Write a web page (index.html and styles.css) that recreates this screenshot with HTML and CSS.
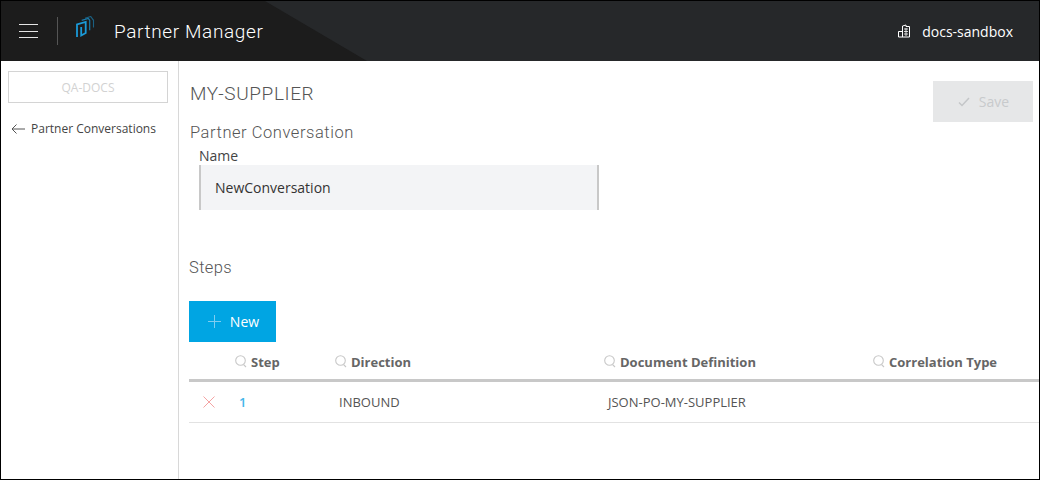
FILE: index.html
```html
<!DOCTYPE html>
<html lang="en">
<head>
<meta charset="utf-8">
<title>Partner Manager</title>
<link rel="stylesheet" href="styles.css">
</head>
<body>
<div class="frame">
  <header class="topbar">
    <button class="burger" aria-label="Menu"><span></span><span></span><span></span></button>
    <div class="divider"></div>
    <svg class="logo" width="20" height="24" viewBox="0 0 20 24" fill="none" stroke="#1a9ad8">
      <path d="M2 21V8.500L10.700 6V17L6.200 19.500V11" stroke-width="1.800"/>
      <path d="M6.700 4.300L13.300 2.400L14.700 4.300V14.300" stroke-width="1.200" opacity=".75"/>
      <path d="M10 2.200L15.700 .5L18.500 4.300V11.500" stroke-width="1.100" opacity=".55"/>
    </svg>
    <h1 class="app-title">Partner Manager</h1>
    <div class="tenant">
      <svg class="tenant-icon" width="13" height="14" viewBox="0 0 13 14" fill="none" stroke="#fff" stroke-width="1">
        <path d="M4.500 13V2L8 1V2.500H11.500V13H.5V7.500H4.500"/>
        <path d="M6 5h4M6 7.500h4M6 10h4M8 4v8" stroke-width=".8"/>
      </svg>
      <span>docs-sandbox</span>
    </div>
  </header>
  <div class="body">
    <aside class="sidebar">
      <div class="org">QA-DOCS</div>
      <a class="back">
        <svg width="14" height="10" viewBox="0 0 14 10" fill="none" stroke="#555" stroke-width="1"><path d="M14 5H1M5.500 .5L1 5l4.500 4.500"/></svg>
        <span>Partner Conversations</span>
      </a>
    </aside>
    <main class="content">
      <div class="title-row">
        <div>
          <h2 class="supplier">MY-SUPPLIER</h2>
          <h3 class="section">Partner Conversation</h3>
        </div>
        <button class="save">
          <svg width="12" height="10" viewBox="0 0 12 10" fill="none" stroke="#c4c6c8" stroke-width="1.500"><path d="M1 5.500L4 8.500 11 1"/></svg>
          <span>Save</span>
        </button>
      </div>
      <div class="field">
        <label class="field-label">Name</label>
        <div class="field-input">NewConversation</div>
      </div>
      <h3 class="steps">Steps</h3>
      <button class="new">
        <svg width="13" height="13" viewBox="0 0 13 13" fill="none" stroke="#7fcdf0" stroke-width="1"><path d="M6.500 0v13M0 6.500h13"/></svg>
        <span>New</span>
      </button>
      <div class="table">
        <div class="row head">
          <div></div>
          <div class="th"><svg class="lens" width="12" height="13" viewBox="0 0 12 13" fill="none" stroke="#c8c8c8" stroke-width="1.100"><circle cx="5.500" cy="5.500" r="4.800"/><path d="M8.500 9.500l2.500 2.500"/></svg>Step</div>
          <div class="th"><svg class="lens" width="12" height="13" viewBox="0 0 12 13" fill="none" stroke="#c8c8c8" stroke-width="1.100"><circle cx="5.500" cy="5.500" r="4.800"/><path d="M8.500 9.500l2.500 2.500"/></svg>Direction</div>
          <div class="th"><svg class="lens" width="12" height="13" viewBox="0 0 12 13" fill="none" stroke="#c8c8c8" stroke-width="1.100"><circle cx="5.500" cy="5.500" r="4.800"/><path d="M8.500 9.500l2.500 2.500"/></svg>Document Definition</div>
          <div class="th"><svg class="lens" width="12" height="13" viewBox="0 0 12 13" fill="none" stroke="#c8c8c8" stroke-width="1.100"><circle cx="5.500" cy="5.500" r="4.800"/><path d="M8.500 9.500l2.500 2.500"/></svg>Correlation Type</div>
        </div>
        <div class="row data">
          <div class="del"><svg width="12" height="12" viewBox="0 0 12 12" fill="none" stroke="#f4a3a3" stroke-width="1"><path d="M.5.500l11 11M11.500.5l-11 11"/></svg></div>
          <div class="td step">1</div>
          <div class="td">INBOUND</div>
          <div class="td">JSON-PO-MY-SUPPLIER</div>
          <div class="td"></div>
        </div>
      </div>
    </main>
  </div>
</div>
</body>
</html>
```
FILE: styles.css
```css
* { box-sizing: border-box; }
html, body { margin: 0; height: 100%; }
body { font-family: "Open Sans", sans-serif; color: #444; background: #fff; }
.frame { width: 1040px; height: 480px; border: 1px solid #000; display: flex; flex-direction: column; overflow: hidden; }
.topbar { position: relative; height: 60px; flex: none; background: #1c1c1c; display: flex; align-items: center; color: #fff; }
.topbar::before { content: ""; position: absolute; inset: 0; background: #26282a; clip-path: polygon(264px 0, 100% 0, 100% 100%, 366px 100%); }
.topbar > * { position: relative; }
.burger { width: 19px; height: 14px; margin-left: 18px; padding: 0; border: 0; background: none; display: flex; flex-direction: column; justify-content: space-between; }
.burger span { display: block; height: 1px; background: #e4e4e4; }
.divider { width: 1px; height: 28px; margin-left: 19px; background: #555; }
.logo { margin-left: 17px; margin-top: -6px; }
.app-title { margin: 0 0 0 19px; font: 300 19px "Roboto", sans-serif; letter-spacing: .62px; color: #fff; }
.tenant { margin-left: auto; margin-right: 26px; display: flex; align-items: center; gap: 11px; font-size: 14px; font-weight: 500; }
.body { flex: 1; display: flex; min-height: 0; }
.sidebar { width: 178px; flex: none; border-right: 1px solid #d8d8d8; padding: 10px 10px 0 7px; }
.org { height: 32px; border: 1px solid #d4d4d4; color: #d2d2d2; font-size: 12px; font-weight: 500; display: flex; align-items: center; justify-content: center; }
.back { display: flex; align-items: center; gap: 6px; margin-top: 17px; margin-left: 3px; font-size: 12px; color: #444; white-space: nowrap; }
.content { flex: 1; padding: 0 6px 0 10px; min-width: 0; }
.title-row { display: flex; justify-content: space-between; align-items: flex-start; height: 80px; }
.supplier { margin: 20px 0 0 1px; font: 300 19px/26px "Roboto", sans-serif; letter-spacing: .6px; color: #555; }
.section { margin: 15px 0 0 1px; font: 300 16.500px/22px "Roboto", sans-serif; letter-spacing: .55px; color: #555; }
.save { margin-top: 20px; width: 100px; height: 41px; padding-left: 7px; border: 0; background: #e6e7e8; color: #c8cacc; font: 500 14px "Open Sans", sans-serif; display: flex; align-items: center; justify-content: center; gap: 9px; }
.field { margin-left: 10px; width: 400px; }
.field-label { display: block; font-size: 14px; line-height: 20px; margin-top: 4px; position: relative; top: 1px; color: #444; }
.field-input { height: 45px; background: #f3f4f6; border-left: 2px solid #c8c8c8; border-right: 2px solid #c8c8c8; padding-left: 14px; display: flex; align-items: center; font-size: 14px; color: #333; }
.steps { margin: 46px 0 0; font: 300 16.500px/24px "Roboto", sans-serif; letter-spacing: .35px; color: #555; }
.new { margin-top: 21px; width: 87px; height: 41px; padding-left: 8px; border: 0; background: #00a5e3; color: #fff; font: 500 14px "Open Sans", sans-serif; display: flex; align-items: center; justify-content: center; gap: 9px; }
.table { width: 851px; }
.row { display: grid; grid-template-columns: 46px 100px 269px 269px 1fr; }
.head { height: 40px; border-bottom: 3px solid #c8c8c8; align-items: center; padding-top: 2px; }
.th { display: flex; align-items: center; gap: 4px; font-size: 13px; font-weight: 700; color: #666; }
.lens { flex: none; }
.data { height: 41px; border-bottom: 1px solid #e2e2e2; align-items: center; font-size: 13px; color: #555; }
.del { display: flex; padding-left: 14px; }
.td { padding-left: 4px; }
.step { color: #45b6ea; font-size: 13px; font-weight: 600; }
```
